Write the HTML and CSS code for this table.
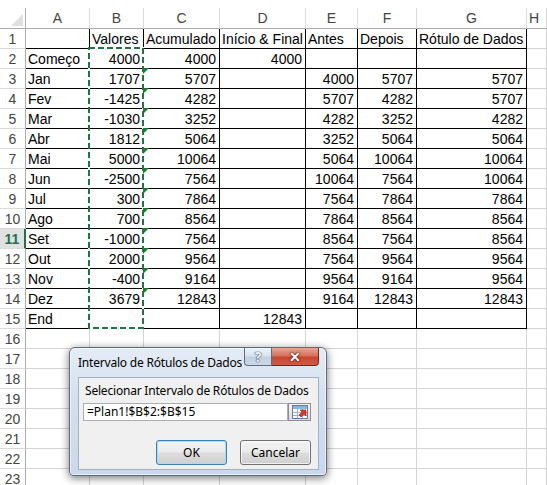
FILE: index.html
```html
<!DOCTYPE html>
<html lang="pt">
<head>
<meta charset="utf-8">
<title>Planilha</title>
<link rel="stylesheet" href="styles.css">
</head>
<body>
<div class="sheet">
  <div class="corner"></div><div class="hd">A</div><div class="hd">B</div><div class="hd">C</div><div class="hd">D</div><div class="hd">E</div><div class="hd">F</div><div class="hd">G</div><div class="hd last">H</div>

  <div class="rn">1</div><div class="b"></div><div class="b">Valores</div><div class="b">Acumulado</div><div class="b">Início &amp; Final</div><div class="b">Antes</div><div class="b">Depois</div><div class="b">Rótulo de Dados</div><div></div>
  <div class="rn">2</div><div class="b">Começo</div><div class="b r">4000</div><div class="b r">4000</div><div class="b r">4000</div><div class="b"></div><div class="b"></div><div class="b"></div><div></div>
  <div class="rn">3</div><div class="b">Jan</div><div class="b r">1707</div><div class="b r">5707</div><div class="b"></div><div class="b r">4000</div><div class="b r">5707</div><div class="b r">5707</div><div></div>
  <div class="rn">4</div><div class="b">Fev</div><div class="b r">-1425</div><div class="b r">4282</div><div class="b"></div><div class="b r">5707</div><div class="b r">4282</div><div class="b r">5707</div><div></div>
  <div class="rn">5</div><div class="b">Mar</div><div class="b r">-1030</div><div class="b r">3252</div><div class="b"></div><div class="b r">4282</div><div class="b r">3252</div><div class="b r">4282</div><div></div>
  <div class="rn">6</div><div class="b">Abr</div><div class="b r">1812</div><div class="b r">5064</div><div class="b"></div><div class="b r">3252</div><div class="b r">5064</div><div class="b r">5064</div><div></div>
  <div class="rn">7</div><div class="b">Mai</div><div class="b r">5000</div><div class="b r">10064</div><div class="b"></div><div class="b r">5064</div><div class="b r">10064</div><div class="b r">10064</div><div></div>
  <div class="rn">8</div><div class="b">Jun</div><div class="b r">-2500</div><div class="b r">7564</div><div class="b"></div><div class="b r">10064</div><div class="b r">7564</div><div class="b r">10064</div><div></div>
  <div class="rn">9</div><div class="b">Jul</div><div class="b r">300</div><div class="b r">7864</div><div class="b"></div><div class="b r">7564</div><div class="b r">7864</div><div class="b r">7864</div><div></div>
  <div class="rn">10</div><div class="b">Ago</div><div class="b r">700</div><div class="b r">8564</div><div class="b"></div><div class="b r">7864</div><div class="b r">8564</div><div class="b r">8564</div><div></div>
  <div class="rn sel">11</div><div class="b">Set</div><div class="b r">-1000</div><div class="b r">7564</div><div class="b"></div><div class="b r">8564</div><div class="b r">7564</div><div class="b r">8564</div><div></div>
  <div class="rn">12</div><div class="b">Out</div><div class="b r">2000</div><div class="b r">9564</div><div class="b"></div><div class="b r">7564</div><div class="b r">9564</div><div class="b r">9564</div><div></div>
  <div class="rn">13</div><div class="b">Nov</div><div class="b r">-400</div><div class="b r">9164</div><div class="b"></div><div class="b r">9564</div><div class="b r">9164</div><div class="b r">9564</div><div></div>
  <div class="rn">14</div><div class="b">Dez</div><div class="b r">3679</div><div class="b r">12843</div><div class="b"></div><div class="b r">9164</div><div class="b r">12843</div><div class="b r">12843</div><div></div>
  <div class="rn">15</div><div class="b">End</div><div class="b"></div><div class="b"></div><div class="b r">12843</div><div class="b"></div><div class="b"></div><div class="b"></div><div></div>
  <div class="rn">16</div><div></div><div></div><div></div><div></div><div></div><div></div><div></div><div></div>
  <div class="rn">17</div><div></div><div></div><div></div><div></div><div></div><div></div><div></div><div></div>
  <div class="rn">18</div><div></div><div></div><div></div><div></div><div></div><div></div><div></div><div></div>
  <div class="rn">19</div><div></div><div></div><div></div><div></div><div></div><div></div><div></div><div></div>
  <div class="rn">20</div><div></div><div></div><div></div><div></div><div></div><div></div><div></div><div></div>
  <div class="rn">21</div><div></div><div></div><div></div><div></div><div></div><div></div><div></div><div></div>
  <div class="rn">22</div><div></div><div></div><div></div><div></div><div></div><div></div><div></div><div></div>
  <div class="rn">23</div><div></div><div></div><div></div><div></div><div></div><div></div><div></div><div></div>
</div>

<svg class="ants" width="547" height="340" viewBox="0 0 547 340">
  <rect x="89" y="48" width="54" height="280" fill="none" stroke="#ffffff" stroke-width="2"/>
  <rect x="89" y="48" width="54" height="280" fill="none" stroke="#217346" stroke-width="2" stroke-dasharray="6 3"/>
  <g fill="#1e7b34">
    <polygon points="143,68 149,68 143,74"/>
    <polygon points="143,88 149,88 143,94"/>
    <polygon points="143,108 149,108 143,114"/>
    <polygon points="143,128 149,128 143,134"/>
    <polygon points="143,148 149,148 143,154"/>
    <polygon points="143,168 149,168 143,174"/>
    <polygon points="143,188 149,188 143,194"/>
    <polygon points="143,208 149,208 143,214"/>
    <polygon points="143,228 149,228 143,234"/>
    <polygon points="143,248 149,248 143,254"/>
    <polygon points="143,268 149,268 143,274"/>
    <polygon points="143,288 149,288 143,294"/>
  </g>
</svg>

<div class="dialog">
  <div class="titlebar">
    <span class="title">Intervalo de Rótulos de Dados</span>
    <div class="capbtns">
      <span class="help">?</span>
      <span class="close">✕</span>
    </div>
  </div>
  <div class="panel">
    <div class="label">Selecionar Intervalo de Rótulos de Dados</div>
    <div class="inputrow">
      <div class="input">=Plan1!$B$2:$B$15</div>
      <div class="refbtn">
        <svg width="16" height="14" viewBox="0 0 16 14">
          <rect x="0.5" y="0.5" width="15" height="13" fill="#ffffff" stroke="#5b7fa8"/>
          <rect x="1" y="1" width="14" height="3" fill="#8fb3dc"/>
          <path d="M1 7.5h14M1 10.5h14M5.5 4v9M10.5 4v9" stroke="#9ab0c8" stroke-width="1"/>
          <path d="M8 5l6 0 0 6-2-2-3 3-2-2 3-3z" fill="#e0332b" stroke="#9a1d16" stroke-width="0.6"/>
        </svg>
      </div>
    </div>
    <div class="buttons">
      <button class="btn ok">OK</button>
      <button class="btn">Cancelar</button>
    </div>
  </div>
</div>
</body>
</html>
```

FILE: styles.css
```css
* {
  box-sizing: border-box;
  margin: 0;
  padding: 0;
}

html, body {
  width: 547px;
  height: 485px;
  overflow: hidden;
  background: #ffffff;
}

body {
  position: relative;
  font-family: "Liberation Sans", Arial, sans-serif;
  font-size: 14px;
  color: #000000;
}

.sheet {
  display: grid;
  grid-template-columns: 26px 64px 54px 76px 86px 52px 59px 110px 20px;
  grid-template-rows: 21px;
  grid-auto-rows: 20px;
  width: 547px;
  margin-top: 8px;
}

.sheet > div {
  border-right: 1px solid #d4d4d4;
  border-bottom: 1px solid #d4d4d4;
  white-space: nowrap;
  line-height: 20px;
  padding: 0 2px;
}

.sheet > .corner {
  position: relative;
  border-right: 1px solid #ababab;
  border-bottom: 1px solid #ababab;
}

.corner::after {
  content: "";
  position: absolute;
  right: 2px;
  bottom: 2px;
  width: 0;
  height: 0;
  border-left: 12px solid transparent;
  border-bottom: 12px solid #dfdfdf;
}

.sheet > .hd {
  text-align: center;
  color: #444444;
  border-right: 1px solid #dadada;
  border-bottom: 1px solid #ababab;
  line-height: 21px;
}

.sheet > .hd.last {
  text-align: left;
  padding-left: 2px;
}

.sheet > .rn {
  text-align: center;
  color: #444444;
  border-right: 1px solid #ababab;
  border-bottom: 1px solid #dadada;
  padding: 0;
}

.sheet > .rn.sel {
  background: #e1e1e1;
  color: #217346;
  font-weight: bold;
  border-right: 2px solid #217346;
}

.sheet > .b {
  border-right-color: #000000;
  border-bottom-color: #000000;
}

.sheet > .r {
  text-align: right;
  padding-right: 3px;
}

.ants {
  position: absolute;
  left: 0;
  top: 0;
}

/* Dialog */
.dialog {
  position: absolute;
  left: 69px;
  top: 347px;
  width: 258px;
  border: 1px solid #5d6b7d;
  border-radius: 6px 6px 4px 4px;
  background: linear-gradient(180deg, #e4ecf6 0%, #d3e0ef 40%, #c9d8eb 100%);
  box-shadow: 0 2px 8px rgba(0, 0, 0, 0.55), inset 0 0 0 1px rgba(255, 255, 255, 0.6);
  font-family: "Noto Sans", "Open Sans", sans-serif;
  font-size: 12px;
  padding: 0 7px 5px 8px;
}

.titlebar {
  height: 29px;
  display: flex;
  align-items: center;
  justify-content: space-between;
  position: relative;
}

.title {
  color: #000000;
  white-space: nowrap;
  letter-spacing: -0.2px;
}

.capbtns {
  position: absolute;
  right: 0;
  top: 0;
  display: flex;
}

.help, .close {
  display: flex;
  align-items: center;
  justify-content: center;
  height: 18px;
  border: 1px solid #5e6b7c;
  border-top: none;
  font-weight: bold;
  color: #ffffff;
}

.help {
  width: 28px;
  border-radius: 0 0 0 4px;
  background: linear-gradient(180deg, #eef3f9 0%, #d9e3ef 45%, #c2d0e1 55%, #cad8e8 100%);
  color: #eef2f7;
  font-size: 14px;
  text-shadow: 0 0 1px #4a5566, 0 0 1px #4a5566, 0 0 1px #4a5566;
}

.close {
  width: 47px;
  border-left: none;
  border-color: #5b2f28;
  border-radius: 0 0 4px 0;
  background: linear-gradient(180deg, #e8a596 0%, #d7715c 45%, #c7462f 55%, #d35a41 100%);
  font-size: 14px;
  text-shadow: 0 0 1px #4a1810, 0 0 1px #4a1810, 0 0 2px #4a1810;
}

.panel {
  background: #f0f0f0;
  border: 1px solid #a3b1c3;
  padding: 5px 7px 4px 4px;
  display: flex;
  flex-direction: column;
}

.label {
  padding-left: 2px;
  line-height: 15px;
  white-space: nowrap;
  letter-spacing: -0.2px;
}

.inputrow {
  display: flex;
  margin-top: 5px;
  height: 18px;
}

.input {
  width: 207px;
  height: 18px;
  background: #ffffff;
  border: 1px solid #abadb3;
  line-height: 16px;
  padding-left: 3px;
  white-space: nowrap;
}

.refbtn {
  width: 23px;
  height: 18px;
  border: 1px solid #8f8f8f;
  background: linear-gradient(180deg, #f6f6f6, #dcdcdc);
  display: flex;
  align-items: center;
  justify-content: center;
}

.buttons {
  display: flex;
  justify-content: flex-end;
  gap: 13px;
  margin-top: 19px;
}

.btn {
  width: 71px;
  height: 25px;
  border: 1px solid #707070;
  border-radius: 3px;
  background: linear-gradient(180deg, #f2f2f2 0%, #ebebeb 48%, #dddddd 52%, #cfcfcf 100%);
  box-shadow: inset 0 0 0 1px rgba(255, 255, 255, 0.7);
  font-family: "Noto Sans", "Open Sans", sans-serif;
  font-size: 12px;
  color: #000000;
}

.btn.ok {
  border-color: #3c7fb1;
  box-shadow: inset 0 0 0 1px #a6dcf7;
}
```
